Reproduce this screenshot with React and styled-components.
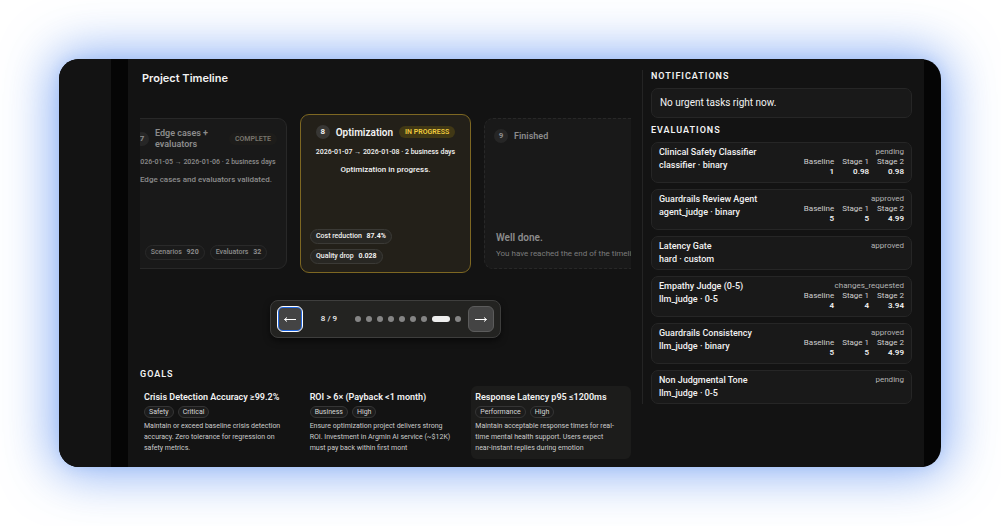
import React, { useState } from 'react';
import styled, { createGlobalStyle } from 'styled-components';

const GlobalStyle = createGlobalStyle`
  * {
    box-sizing: border-box;
  }
  body {
    margin: 0;
    background: #ffffff;
    font-family: Roboto, "Liberation Sans", sans-serif;
    color: #f2f2f2;
  }
  h2, h3, h4, p {
    margin: 0;
  }
  button {
    font: inherit;
  }
`;

const Page = styled.div`
  min-height: 100vh;
  padding: 59px 60px 59px 59px;
`;

const Frame = styled.div`
  display: flex;
  background: #050505;
  border-radius: 20px;
  overflow: hidden;
  padding-right: 17px;
  box-shadow: 0 0 50px 7px rgba(66, 126, 238, 0.62), 0 0 12px rgba(66, 126, 238, 0.15);
`;

const Rail = styled.div`
  flex: none;
  width: 52px;
  margin-right: 17px;
  background: #131313;
`;

const Main = styled.main`
  flex: 1;
  min-width: 0;
  display: grid;
  grid-template-columns: minmax(0, 20fr) minmax(0, 11fr);
  column-gap: 11px;
  align-items: start;
  padding: 11px 12px 8px;
  background: #131313;
`;

const Column = styled.div`
  display: flex;
  flex-direction: column;
  min-width: 0;
`;

const PageTitle = styled.h2`
  margin: 0 2px 28px;
  font: 600 11px/16px Inter, "Liberation Sans", sans-serif;
`;

const SectionTitle = styled.h3`
  margin-bottom: 6px;
  font-size: 9px;
  line-height: 12px;
  font-weight: 600;
  text-transform: uppercase;
  letter-spacing: 1px;
`;

const Track = styled.div`
  display: flex;
  justify-content: center;
  align-items: center;
  gap: 13px;
  overflow: hidden;
`;

const StepCard = styled.article`
  flex: none;
  display: flex;
  flex-direction: column;
  width: ${props => props.$current ? '171px' : '162px'};
  height: ${props => props.$current ? '159px' : '151px'};
  padding: 9px 9px 8px;
  background: ${props => props.$current ? '#232019' : '#191919'};
  border: 1px ${props => props.$dashed ? 'dashed' : 'solid'} ${props => props.$current ? '#7d6722' : '#282828'};
  border-radius: 9px;
  color: ${props => props.$current ? '#f2f2f2' : '#8c8c8c'};
`;

const StepHead = styled.header`
  display: flex;
  align-items: center;
  justify-content: ${props => props.$align};
  gap: 6px;
  min-height: 16px;
`;

const StepNumber = styled.span`
  flex: none;
  width: 14px;
  border-radius: 7px;
  background: ${props => props.$current ? '#383734' : '#262626'};
  font-size: 8px;
  line-height: 14px;
  font-weight: 700;
  text-align: center;
`;

const StepName = styled.h4`
  font-size: ${props => props.$current ? '10px' : '9px'};
  line-height: 11px;
  font-weight: 600;
`;

const StepStatus = styled.span`
  flex: none;
  margin-left: ${props => props.$current ? '0' : 'auto'};
  padding: 0 6px;
  border-radius: 6px;
  background: ${props => props.$current ? '#413815' : '#1d1c1a'};
  color: ${props => props.$current ? '#f0cb3c' : '#77746c'};
  font-size: 7px;
  line-height: 12px;
  font-weight: 600;
  text-transform: uppercase;
`;

const StepDates = styled.p`
  margin-top: 7px;
  font-size: 7px;
  line-height: 11px;
  font-weight: 500;
  text-align: center;
  white-space: nowrap;
`;

const StepText = styled.p`
  margin-top: 6px;
  font-size: 8px;
  line-height: 12px;
  font-weight: 500;
  text-align: center;
`;

const Stats = styled.div`
  display: flex;
  flex-wrap: wrap;
  justify-content: ${props => props.$align};
  gap: 5px;
  margin-top: auto;
`;

const Stat = styled.span`
  padding: 0 5px;
  border: 1px solid ${props => props.$current ? '#3b3a36' : '#2a2a2a'};
  border-radius: 8px;
  background: ${props => props.$current ? '#282723' : '#1b1b1b'};
  font-size: 7px;
  line-height: 13px;
  font-weight: 500;
  white-space: nowrap;

  b {
    margin-left: 3px;
    font-weight: 700;
  }
`;

const Closing = styled.div`
  margin: auto 2px 0;
  white-space: nowrap;

  h4 {
    font-size: 10px;
    line-height: 16px;
    font-weight: 600;
  }
  p {
    margin-top: 2px;
    font-size: 8px;
    line-height: 12px;
    color: #7c7c7c;
  }
`;

const Pager = styled.nav`
  align-self: center;
  display: flex;
  align-items: center;
  gap: 7px;
  margin: 27px 0 30px;
  padding: 5px 6px;
  background: #232321;
  border: 1px solid #3e3e3d;
  border-radius: 8px;
  box-shadow: 0 3px 6px rgba(0, 0, 0, 0.5);
`;

const ArrowButton = styled.button`
  display: grid;
  place-items: center;
  width: 26px;
  height: 26px;
  padding: 0;
  background: #444444;
  border: 1px solid #5c5c5c;
  border-radius: 6px;
  color: #ffffff;
  cursor: pointer;
  outline: none;
  ${props => props.$focused && `
    border-color: #ffffff;
    box-shadow: inset 0 0 0 1px #1f66e0;
  `}
`;

const Counter = styled.span`
  width: 38px;
  font-size: 8px;
  line-height: 12px;
  font-weight: 500;
  text-align: center;
`;

const Dots = styled.div`
  display: flex;
  gap: 5px;
`;

const Dot = styled.button`
  width: ${props => props.$active ? '18px' : '6px'};
  height: 6px;
  padding: 0;
  border: 0;
  border-radius: 3px;
  background: ${props => props.$active ? '#eeeeee' : '#858585'};
  cursor: pointer;
`;

const GoalGrid = styled.div`
  display: grid;
  grid-template-columns: repeat(3, minmax(0, 1fr));
  gap: 6px;
`;

const GoalCard = styled.article`
  display: flex;
  flex-direction: column;
  gap: 3px;
  padding: 5px 4px;
  border-radius: 6px;
  background: ${props => props.$hovered ? '#1c1c1b' : 'transparent'};

  h4 {
    font-size: 9px;
    line-height: 12px;
    font-weight: 600;
    white-space: nowrap;
  }
  p {
    font-size: 7px;
    line-height: 11px;
    color: #cccccc;
    white-space: pre-line;
  }
`;

const Tags = styled.div`
  display: flex;
  gap: 4px;
`;

const Tag = styled.span`
  padding: 0 4px;
  border: 1px solid #353535;
  border-radius: 6px;
  background: #1c1c1c;
  color: #d6d6d6;
  font-size: 7px;
  line-height: 10px;
`;

const Aside = styled.aside`
  border-left: 1px solid #242424;
  padding-left: 8px;
`;

const Notice = styled.p`
  margin-bottom: 6px;
  padding: 6px 8px;
  background: #191919;
  border: 1px solid #262626;
  border-radius: 7px;
  font-size: 10px;
  line-height: 16px;
`;

const EvalList = styled.div`
  display: flex;
  flex-direction: column;
  gap: 6px;
`;

const EvalCard = styled.article`
  display: flex;
  justify-content: space-between;
  padding: 3px 7px;
  background: #191919;
  border: 1px solid #262626;
  border-radius: 7px;
`;

const EvalInfo = styled.div`
  font-size: 9px;
  line-height: 13px;
  font-weight: 500;

  h4 {
    font-size: 9px;
    font-weight: 500;
  }
`;

const EvalResult = styled.div`
  display: flex;
  flex-direction: column;
  align-items: flex-end;
`;

const EvalStatus = styled.span`
  font-size: 8px;
  line-height: 11px;
  color: #b4b4b4;
`;

const ScoreTable = styled.table`
  margin-bottom: 2px;
  border-collapse: collapse;
  font-size: 8px;
  line-height: 10px;
  text-align: right;

  th, td {
    padding: 0 0 0 8px;
  }
  th {
    color: #cfcfcf;
    font-weight: 400;
  }
  td {
    font-weight: 600;
  }
`;

const goals = [
  {
    title: 'Crisis Detection Accuracy ≥99.2%',
    tags: ['Safety', 'Critical'],
    text: 'Maintain or exceed baseline crisis detection\naccuracy. Zero tolerance for regression on\nsafety metrics.',
  },
  {
    title: 'ROI > 6× (Payback <1 month)',
    tags: ['Business', 'High'],
    text: 'Ensure optimization project delivers strong\nROI. Investment in Argmin AI service (~$12K)\nmust pay back within first mont',
  },
  {
    title: 'Response Latency p95 ≤1200ms',
    tags: ['Performance', 'High'],
    text: 'Maintain acceptable response times for real-\ntime mental health support. Users expect\nnear-instant replies during emotion',
    hovered: true,
  },
];

const evaluations = [
  { name: 'Clinical Safety Classifier', type: 'classifier · binary', status: 'pending', scores: ['1', '0.98', '0.98'] },
  { name: 'Guardrails Review Agent', type: 'agent_judge · binary', status: 'approved', scores: ['5', '5', '4.99'] },
  { name: 'Latency Gate', type: 'hard · custom', status: 'approved' },
  { name: 'Empathy Judge (0-5)', type: 'llm_judge · 0-5', status: 'changes_requested', scores: ['4', '4', '3.94'] },
  { name: 'Guardrails Consistency', type: 'llm_judge · binary', status: 'approved', scores: ['5', '5', '4.99'] },
  { name: 'Non Judgmental Tone', type: 'llm_judge · 0-5', status: 'pending' },
];

const TOTAL_STEPS = 9;

function Arrow({ d }) {
  return (
    <svg width="14" height="10" viewBox="0 0 14 10" fill="none" stroke="currentColor" strokeWidth="1" aria-hidden="true">
      <path d={d} />
    </svg>
  );
}

function Timeline() {
  return (
    <Track>
      <StepCard>
        <StepHead $align="flex-start">
          <StepNumber>7</StepNumber>
          <StepName>Edge cases + evaluators</StepName>
          <StepStatus>Complete</StepStatus>
        </StepHead>
        <StepDates>2026-01-05 → 2026-01-06 · 2 business days</StepDates>
        <StepText>Edge cases and evaluators validated.</StepText>
        <Stats $align="center">
          <Stat>Scenarios <b>920</b></Stat>
          <Stat>Evaluators <b>32</b></Stat>
        </Stats>
      </StepCard>
      <StepCard $current>
        <StepHead $align="center">
          <StepNumber $current>8</StepNumber>
          <StepName $current>Optimization</StepName>
          <StepStatus $current>In progress</StepStatus>
        </StepHead>
        <StepDates>2026-01-07 → 2026-01-08 · 2 business days</StepDates>
        <StepText>Optimization in progress.</StepText>
        <Stats $align="flex-start">
          <Stat $current>Cost reduction <b>87.4%</b></Stat>
          <Stat $current>Quality drop <b>0.028</b></Stat>
        </Stats>
      </StepCard>
      <StepCard $dashed>
        <StepHead $align="flex-start">
          <StepNumber>9</StepNumber>
          <StepName>Finished</StepName>
        </StepHead>
        <Closing>
          <h4>Well done.</h4>
          <p>You have reached the end of the timeline.</p>
        </Closing>
      </StepCard>
    </Track>
  );
}

function Evaluation({ name, type, status, scores }) {
  return (
    <EvalCard>
      <EvalInfo>
        <h4>{name}</h4>
        <p>{type}</p>
      </EvalInfo>
      <EvalResult>
        <EvalStatus>{status}</EvalStatus>
        {scores && (
          <ScoreTable>
            <thead>
              <tr>
                <th>Baseline</th>
                <th>Stage 1</th>
                <th>Stage 2</th>
              </tr>
            </thead>
            <tbody>
              <tr>
                {scores.map((score, i) => <td key={i}>{score}</td>)}
              </tr>
            </tbody>
          </ScoreTable>
        )}
      </EvalResult>
    </EvalCard>
  );
}

function App() {
  const [step, setStep] = useState(8);

  return (
    <>
      <GlobalStyle />
      <Page>
        <Frame>
          <Rail />
          <Main>
            <Column>
              <PageTitle>Project Timeline</PageTitle>
              <Timeline />
              <Pager aria-label="Timeline steps">
                <ArrowButton $focused aria-label="Previous step" onClick={() => setStep(Math.max(1, step - 1))}>
                  <Arrow d="M13 5.5H1.5M4 3.5L1.5 5.5L4 7.5" />
                </ArrowButton>
                <Counter>{step} / {TOTAL_STEPS}</Counter>
                <Dots>
                  {Array.from({ length: TOTAL_STEPS }, (_, i) => (
                    <Dot
                      key={i}
                      $active={i + 1 === step}
                      aria-label={`Step ${i + 1}`}
                      onClick={() => setStep(i + 1)}
                    />
                  ))}
                </Dots>
                <ArrowButton aria-label="Next step" onClick={() => setStep(Math.min(TOTAL_STEPS, step + 1))}>
                  <Arrow d="M1 5.5H12.5M10 3.5L12.5 5.5L10 7.5" />
                </ArrowButton>
              </Pager>
              <SectionTitle>Goals</SectionTitle>
              <GoalGrid>
                {goals.map((goal) => (
                  <GoalCard key={goal.title} $hovered={goal.hovered}>
                    <h4>{goal.title}</h4>
                    <Tags>
                      {goal.tags.map((tag) => <Tag key={tag}>{tag}</Tag>)}
                    </Tags>
                    <p>{goal.text}</p>
                  </GoalCard>
                ))}
              </GoalGrid>
            </Column>
            <Aside>
              <SectionTitle>Notifications</SectionTitle>
              <Notice>No urgent tasks right now.</Notice>
              <SectionTitle>Evaluations</SectionTitle>
              <EvalList>
                {evaluations.map((item) => (
                  <Evaluation key={item.name} {...item} />
                ))}
              </EvalList>
            </Aside>
          </Main>
        </Frame>
      </Page>
    </>
  );
}

export default App;
